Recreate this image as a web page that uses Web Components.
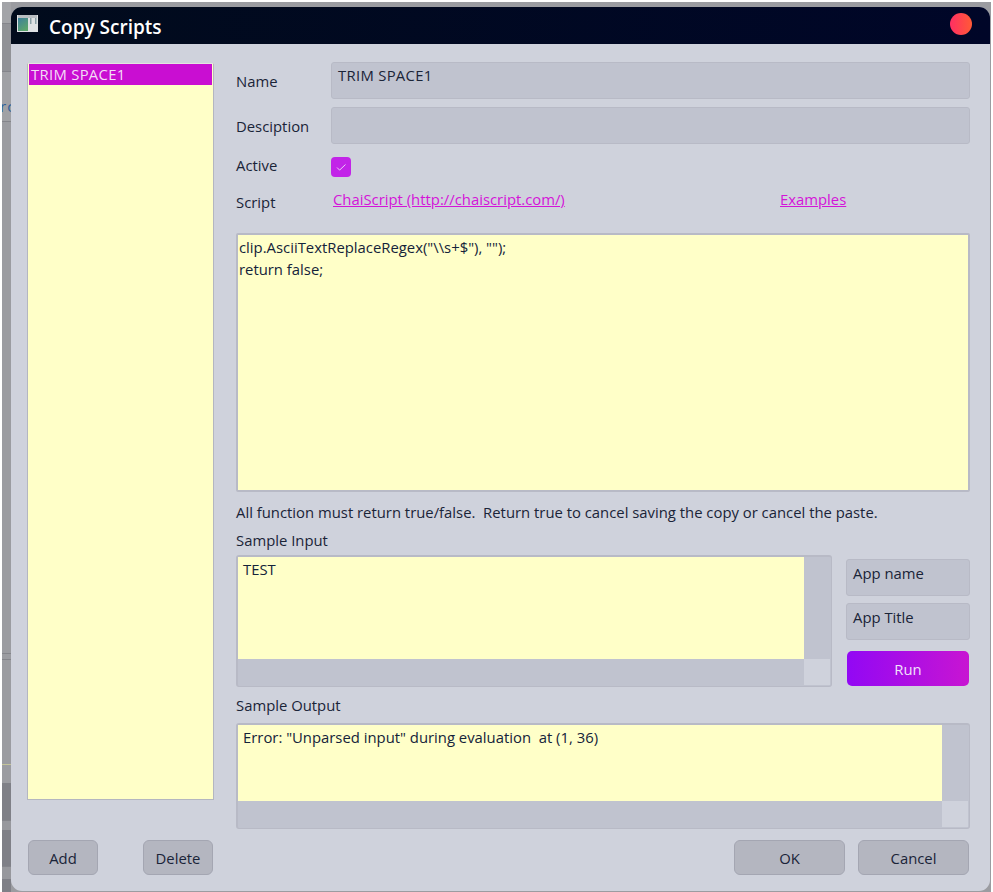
<!DOCTYPE html>
<html>
<head>
<meta charset="utf-8">
<title>Copy Scripts</title>
<style>
  html, body { margin: 0; height: 100%; }
  body {
    width: 993px; height: 892px; overflow: hidden;
    background: #fff;
    font-family: "Open Sans", "Noto Sans", sans-serif;
    font-size: 14.85px;
    color: #1a2438;
  }
</style>
</head>
<body>
<template id="desktop-tpl">
  <style>
    :host { display: flex; box-sizing: border-box; height: 892px; padding: 2px 2px 0 2px; }
    .strip { width: 9px; flex: none; display: flex; flex-direction: column; background: #9b9ca1; overflow: hidden; }
    .strip div { flex: none; box-sizing: border-box; border-bottom: 1px solid #84858b; }
    .rc { font-size: 15px; line-height: 20px; color: #2f5f9a; text-indent: -2px; letter-spacing: 1px; margin-top: 24px; white-space: nowrap; }
    .main { flex: 1; padding: 5px 1px 0 0; background: #9b9ca1; }
  </style>
  <div class="strip">
    <div style="height:22px;background:#a3a4a8"></div>
    <div style="height:48px;background:#919297"></div>
    <div style="height:50px;background:#a0a1a5"><div class="rc" style="border:0">rc</div></div>
    <div style="height:532px"></div>
    <div style="height:6px"></div>
    <div style="height:105px;border-bottom:1px solid #c4c49a"></div>
    <div style="height:18px;border:0"></div>
    <div style="height:38px;background:#7f8087"></div>
    <div style="height:9px;background:#97989d;border:0"></div>
    <div style="height:37px;background:#7f8087"></div>
    <div style="height:12px;background:#97989d;border:0"></div>
    <div style="height:14px;background:#7f8087;border:0"></div>
  </div>
  <div class="main"><slot></slot></div>
</template>

<template id="window-tpl">
  <style>
    :host { display: flex; flex-direction: column; height: 884px; border-radius: 11px; overflow: hidden; background: #cfd2dc; }
    .bar { height: 37px; flex: none; display: flex; align-items: center; color: #fff; padding: 0 18px 0 6px; background: linear-gradient(90deg, #010b1c, #000628); }
    .title { font-size: 19px; font-weight: 600; margin-left: 11px; flex: 1; margin-top: 2px; }
    .close { width: 22px; height: 22px; border-radius: 50%; background: linear-gradient(90deg, #ff2f63, #ff5a36); margin-top: -3px; }
    svg { display: block; margin-top: -4px; }
    .body { flex: 1; min-height: 0; display: grid; grid-template-columns: 187px 1fr; column-gap: 22px; padding: 19px 20px 0 16px; }
  </style>
  <div class="bar">
    <svg width="21" height="17" viewBox="0 0 21 17">
      <defs><linearGradient id="g" x1="0" y1="0" x2="0.6" y2="1"><stop offset="0" stop-color="#3d7f9c"/><stop offset="1" stop-color="#5ca56c"/></linearGradient></defs>
      <rect width="21" height="17" fill="#dfe2e4"/>
      <rect x="1" y="0" width="19" height="3" fill="#b9bec2"/>
      <rect x="1" y="3" width="10" height="13" fill="url(#g)"/>
      <rect x="13" y="3" width="1.5" height="6" fill="#8aa0a6"/>
      <rect x="18" y="3" width="1.5" height="6" fill="#8aa0a6"/>
    </svg>
    <span class="title"><slot name="title"></slot></span>
    <span class="close"></span>
  </div>
  <div class="body"><slot></slot></div>
</template>

<template id="side-tpl">
  <style>
    :host { display: flex; flex-direction: column; }
    .list { height: 737px; box-sizing: border-box; background: #ffffc8; border: 1px solid #b4b6c0; border-top-color: #e4e5e0; padding: 0 1px; }
    .foot { display: flex; justify-content: space-between; margin-top: 40px; padding: 0 1px 0 1px; }
  </style>
  <div class="list"><slot></slot></div>
  <div class="foot"><slot name="foot"></slot></div>
</template>

<template id="item-tpl">
  <style>
    :host { display: block; height: 21px; line-height: 20px; padding-left: 2px; color: #f4dcf6; letter-spacing: .3px; }
    :host([selected]) { background: #c90ed2; }
  </style>
  <slot></slot>
</template>

<template id="button-tpl">
  <style>
    :host { display: inline-flex; align-items: center; justify-content: center; box-sizing: border-box; height: 35px; width: var(--w, 70px); border-radius: 6px; border: 1px solid #a4a6b2; background: #b4b6c0; }
    :host([primary]) { border: 0; border-radius: 5px; background: linear-gradient(90deg, #9208f4, #c815d2); color: #f1e2fb; }
  </style>
  <slot></slot>
</template>

<template id="input-tpl">
  <style>
    :host { display: block; box-sizing: border-box; height: var(--h, 37px); border: 1px solid #b8bac6; border-radius: 3px; background: #c0c3cf; padding: var(--pad, 3px) 6px 0; line-height: 20px; }
  </style>
  <slot></slot>
</template>

<template id="row-tpl">
  <style>
    :host { display: grid; grid-template-columns: 95px 1fr; align-items: center; }
  </style>
  <slot></slot>
</template>

<template id="editor-tpl"><style>
    :host { display: block; box-sizing: border-box; border: 2px solid #b8bac6; border-radius: 2px; background: #ffffc8; padding: 2px 1px; line-height: 21.5px; white-space: pre; color: #14233a; }
  </style><slot></slot></template>

<template id="scroll-tpl">
  <style>
    :host { display: grid; box-sizing: border-box; grid-template-columns: 1fr 27px; grid-template-rows: 1fr 27px; border: 2px solid #b8bac6; border-right-width: 1px; border-bottom-width: 1px; border-radius: 3px; background: #c0c3cf; }
    .text { background: #ffffc8; padding: 2px 5px; line-height: 21px; color: #14233a; white-space: pre; }
    .corner { grid-column: 2; grid-row: 2; background: #cfd2dc; margin: 0 1px 1px 0; }
  </style>
  <div class="text"><slot></slot></div>
  <div class="corner"></div>
</template>

<template id="check-tpl">
  <style>
    :host { display: block; width: 20px; height: 20px; }
    svg { display: block; }
  </style>
  <svg width="20" height="20" viewBox="0 0 20 20">
    <rect width="20" height="20" rx="4" fill="#c224e8"/>
    <path d="M6 10.5l2.6 2.6L14.5 7.5" fill="none" stroke="#ecd0f8" stroke-width="1"/>
  </svg>
</template>

<template id="form-tpl">
  <style>
    :host { display: flex; flex-direction: column; }
  </style>
  <slot></slot>
</template>

<cs-desktop>
<cs-window>
  <span slot="title">Copy Scripts</span>
  <cs-side>
    <cs-item selected>TRIM SPACE1</cs-item>
    <cs-button slot="foot">Add</cs-button>
    <cs-button slot="foot">Delete</cs-button>
  </cs-side>
  <cs-form>
    <cs-row style="margin-top:-1px"><span>Name</span><cs-input style="--pad:2px"><span style="letter-spacing:.3px">TRIM SPACE1</span></cs-input></cs-row>
    <cs-row style="margin-top:8px"><span>Desciption</span><cs-input></cs-input></cs-row>
    <cs-row style="margin-top:13px"><span style="margin-top:-4px">Active</span><cs-check></cs-check></cs-row>
    <cs-row style="margin-top:13px">
      <span style="padding-top:2px">Script</span>
      <span style="display:flex;padding-left:2px;margin-top:-5px;color:#d414d8;text-decoration:underline">
        <span style="width:447px">ChaiScript (http://chaiscript.com/)</span><span>Examples</span>
      </span>
    </cs-row>
    <cs-editor style="height:259px;margin-top:21px">clip.AsciiTextReplaceRegex("\\s+$"), "");
return false;</cs-editor>
    <div style="margin-top:10px;line-height:20px;white-space:pre">All function must return true/false.  Return true to cancel saving the copy or cancel the paste.</div>
    <div style="margin-top:8px;line-height:20px">Sample Input</div>
    <div style="display:flex;margin-top:5px">
      <cs-scroll style="width:596px;height:132px">TEST</cs-scroll>
      <div style="margin-left:14px;padding-top:4px;flex:1;display:flex;flex-direction:column;gap:7px">
        <cs-input>App name</cs-input>
        <cs-input>App Title</cs-input>
        <cs-button primary style="--w:122px;margin:4px 0 0 1px">Run</cs-button>
      </div>
    </div>
    <div style="margin-top:8px;line-height:20px">Sample Output</div>
    <cs-scroll style="height:106px;margin-top:8px">Error: "Unparsed input" during evaluation  at (1, 36)</cs-scroll>
    <div style="display:flex;justify-content:flex-end;gap:13px;margin-top:11px;padding-right:1px">
      <cs-button style="--w:111px">OK</cs-button>
      <cs-button style="--w:111px">Cancel</cs-button>
    </div>
  </cs-form>
</cs-window>
</cs-desktop>

<script>
function define(name, tpl) {
  customElements.define(name, class extends HTMLElement {
    constructor() {
      super();
      this.attachShadow({ mode: 'open' }).appendChild(document.getElementById(tpl).content.cloneNode(true));
    }
  });
}
define('cs-desktop', 'desktop-tpl');
define('cs-window', 'window-tpl');
define('cs-side', 'side-tpl');
define('cs-item', 'item-tpl');
define('cs-button', 'button-tpl');
define('cs-input', 'input-tpl');
define('cs-row', 'row-tpl');
define('cs-editor', 'editor-tpl');
define('cs-scroll', 'scroll-tpl');
define('cs-check', 'check-tpl');
define('cs-form', 'form-tpl');
</script>
</body>
</html>
